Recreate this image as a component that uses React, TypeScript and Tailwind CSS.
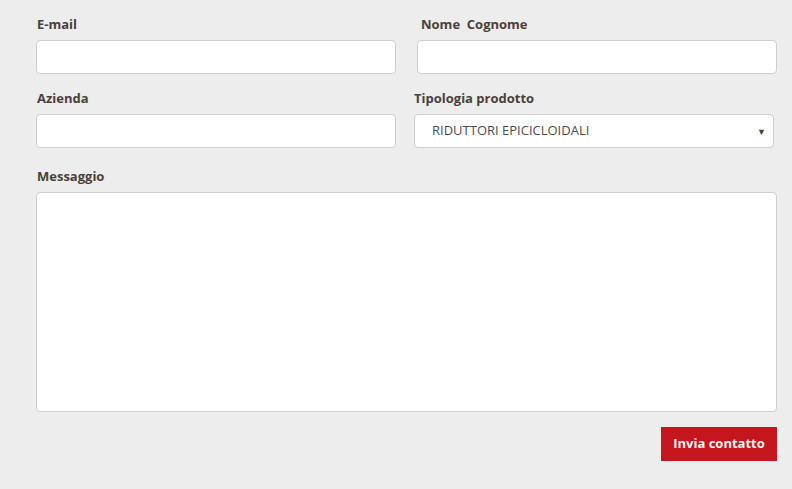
import React from 'react';

const labelCls =
  "block text-[13px] font-bold leading-[18px] text-[#4a403b] font-['Open_Sans',sans-serif]";
const inputCls =
  'block h-[34px] w-[360px] rounded-[4px] border border-[#cfcfcf] bg-white px-3 text-[12px] text-[#555] outline-none';

const App = () => {
  return (
    <div className="min-h-[489px] w-[792px] bg-[#ededed] pl-[36px] pt-[15px] font-['Open_Sans',sans-serif]">
      {/* Row 1 */}
      <div className="flex gap-[21px]">
        <div>
          <label className={`${labelCls} pl-px`}>E-mail</label>
          <input type="text" className={`${inputCls} mt-[7px]`} />
        </div>
        <div>
          <label className={`${labelCls} pl-[4px]`}>
            Nome&nbsp;&nbsp;Cognome
          </label>
          <input type="text" className={`${inputCls} mt-[7px]`} />
        </div>
      </div>

      {/* Row 2 */}
      <div className="mt-[15px] flex gap-[18px]">
        <div>
          <label className={`${labelCls} pl-px`}>Azienda</label>
          <input type="text" className={`${inputCls} mt-[7px]`} />
        </div>
        <div>
          <label className={labelCls}>Tipologia prodotto</label>
          <div className="relative mt-[7px] flex h-[34px] w-[360px] items-center rounded-[4px] border border-[#cfcfcf] bg-white pl-[17px] text-[13px] text-[#4d4d4d] font-['Open_Sans',sans-serif]">
            RIDUTTORI EPICICLOIDALI
            <span className="absolute right-[7px] top-[10px] text-[9px] text-[#444]">▼</span>
          </div>
        </div>
      </div>

      {/* Messaggio */}
      <div className="mt-[19px]">
        <label className={`${labelCls} pl-px`}>Messaggio</label>
        <textarea className="mt-[7px] block h-[220px] w-[741px] resize-none rounded-[4px] border border-[#cfcfcf] bg-white outline-none" />
      </div>

      <div className="mt-[15px] flex w-[741px] justify-end">
        <button className="h-[34px] w-[116px] bg-[#c4161c] text-[13px] font-bold text-[#fdf2ef] font-['Open_Sans',sans-serif]">
          Invia contatto
        </button>
      </div>
    </div>
  );
};

export default App;
